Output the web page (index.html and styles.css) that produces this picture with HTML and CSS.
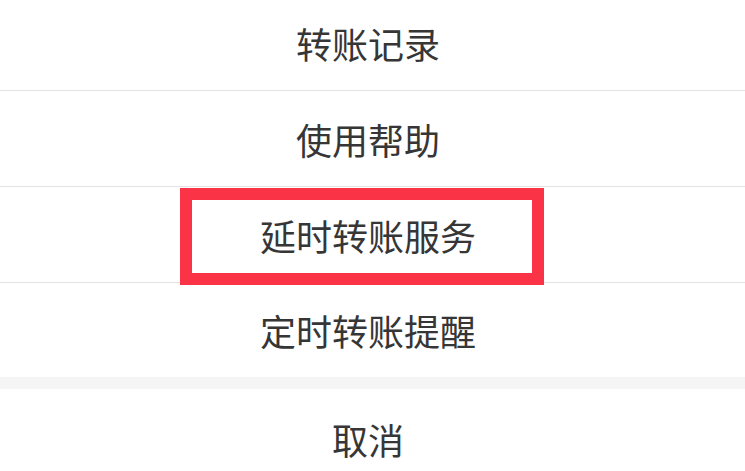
FILE: index.html
```html
<!DOCTYPE html>
<html lang="zh-CN">
<head>
<meta charset="utf-8">
<link rel="stylesheet" href="styles.css">
</head>
<body>
<div class="sheet">
  <div class="group">
    <div class="item">转账记录</div>
    <div class="item">使用帮助</div>
    <div class="item highlighted">延时转账服务<span class="mark"></span></div>
    <div class="item last">定时转账提醒</div>
  </div>
  <div class="gap"></div>
  <div class="item cancel">取消</div>
</div>
</body>
</html>
```
FILE: styles.css
```css
html, body {
  margin: 0;
  padding: 0;
  background: #ffffff;
}
body {
  width: 745px;
  height: 471px;
  overflow: hidden;
  font-family: "Noto Sans CJK SC", "Noto Sans", sans-serif;
}
.sheet {
  margin-top: -5px;
  display: flex;
  flex-direction: column;
}
.group {
  display: flex;
  flex-direction: column;
}
.item {
  position: relative;
  height: 95px;
  padding-right: 9px;
  border-bottom: 1px solid #e3e3e3;
  display: flex;
  align-items: center;
  justify-content: center;
  font-size: 36px;
  line-height: 1;
  color: #363636;
}
.item.last {
  border-bottom: none;
  height: 94px;
}
.gap {
  height: 12px;
  background: #f5f5f5;
}
.item.cancel {
  height: 100px;
  border-bottom: none;
}
.mark {
  position: absolute;
  left: 180px;
  top: 1px;
  width: 364px;
  height: 97px;
  box-sizing: border-box;
  border: 12px solid #fb3347;
  z-index: 2;
}
```
